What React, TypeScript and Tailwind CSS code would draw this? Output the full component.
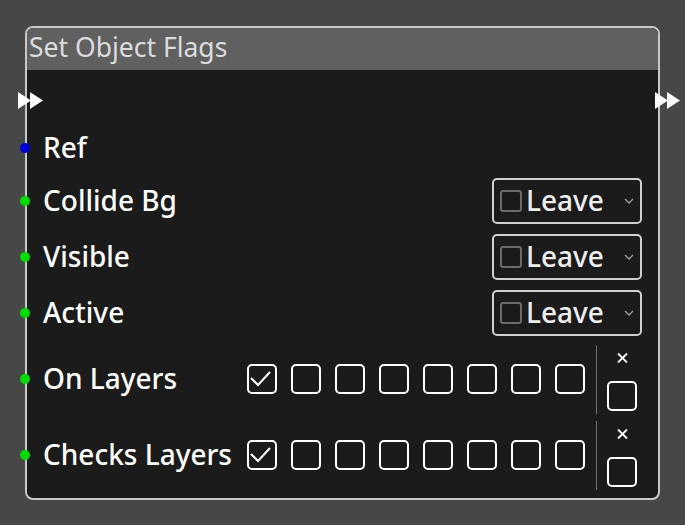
import React from 'react';

const font = { fontFamily: '"Noto Sans", "Open Sans", sans-serif' };

function FlowArrows() {
  return (
    <svg width="25" height="17" viewBox="0 0 25 17">
      <path d="M0 0 L13 8.5 L0 17 Z" fill="#ffffff" />
      <path d="M12 0 L25 8.5 L12 17 Z" fill="#ffffff" />
    </svg>
  );
}

function Dot({ color }: { color: string }) {
  return <span className={`absolute left-[-7px] top-1/2 -translate-y-1/2 w-[10px] h-[10px] rounded-full ${color}`} />;
}

function LeaveSelect() {
  return (
    <div className="flex items-center w-[150px] h-[46px] border-2 border-[#d0d0d0] rounded-[5px] pl-[6px] pr-[6px]">
      <span className="w-[22px] h-[22px] border-2 border-[#6a6a6a] rounded-[3px]" />
      <span className="ml-[4px] -mt-[3px] text-[28px] font-medium leading-none text-[#eeeeee]">Leave</span>
      <svg className="ml-auto" width="10" height="6" viewBox="0 0 10 6">
        <path d="M1 1 L5 5 L9 1" fill="none" stroke="#a0a0a0" strokeWidth="1.3" />
      </svg>
    </div>
  );
}

function Box({ checked }: { checked?: boolean }) {
  return (
    <span className="w-[30px] h-[30px] border-2 border-white rounded-[5px] flex items-center justify-center shrink-0">
      {checked && (
        <svg width="26" height="26" viewBox="0 0 26 26" className="-mt-[2px] -ml-[2px]">
          <path d="M3 13 L10 20 L22 7" fill="none" stroke="#ffffff" strokeWidth="2" />
        </svg>
      )}
    </span>
  );
}

function Label({ children, className = '' }: { children: React.ReactNode; className?: string }) {
  return <span className={`-mt-[3px] text-[28px] font-medium leading-none text-white whitespace-nowrap ${className}`}>{children}</span>;
}

function SelectRow({ label }: { label: string }) {
  return (
    <div className="relative flex items-center h-[56px] pl-[16px] pr-[16px]">
      <Dot color="bg-[#00dd00]" />
      <Label>{label}</Label>
      <div className="ml-auto">
        <LeaveSelect />
      </div>
    </div>
  );
}

function LayersRow({ label }: { label: string }) {
  return (
    <div className="relative flex items-center h-[76px] pl-[16px]">
      <Dot color="bg-[#00dd00]" />
      <Label className="w-[204px]">{label}</Label>
      <div className="flex gap-[14px]">
        {[0, 1, 2, 3, 4, 5, 6, 7].map((i) => (
          <Box key={i} checked={i === 0} />
        ))}
      </div>
      <span className="ml-[11px] w-[1px] h-[69px] bg-[#707070]" />
      <div className="ml-[10px] flex flex-col items-center">
        <span className="h-[20px] flex items-center">
          <svg width="11" height="10" viewBox="0 0 11 10">
            <path d="M1 0.5 L10 9.5 M10 0.5 L1 9.5" stroke="#ffffff" strokeWidth="1.8" />
          </svg>
        </span>
        <span className="mt-[13px]">
          <Box />
        </span>
      </div>
    </div>
  );
}

export default function App() {
  return (
    <div className="w-[685px] h-[525px] bg-[#474747] pt-[26px] pl-[25px]" style={font}>
      <div className="relative w-[635px] h-[474px] border-2 border-[#c8c8c8] rounded-[8px] bg-[#1b1b1b]">
        <div className="h-[42px] bg-[#606060] rounded-t-[6px] pl-[2px] flex items-center">
          <span className="-mt-[3px] text-[26.5px] leading-none text-[#dcdcdc]">Set Object Flags</span>
        </div>

        <div className="relative h-[60px]">
          <span className="absolute left-[-9px] top-[22px]">
            <FlowArrows />
          </span>
          <span className="absolute right-[-22px] top-[22px]">
            <FlowArrows />
          </span>
        </div>

        <div className="relative flex items-center h-[36px] pl-[16px]">
          <Dot color="bg-[#0000dd]" />
          <Label>Ref</Label>
        </div>

        <div className="mt-[7px]">
          <SelectRow label="Collide Bg" />
          <SelectRow label="Visible" />
          <SelectRow label="Active" />
          <LayersRow label="On Layers" />
          <LayersRow label="Checks Layers" />
        </div>
      </div>
    </div>
  );
}
